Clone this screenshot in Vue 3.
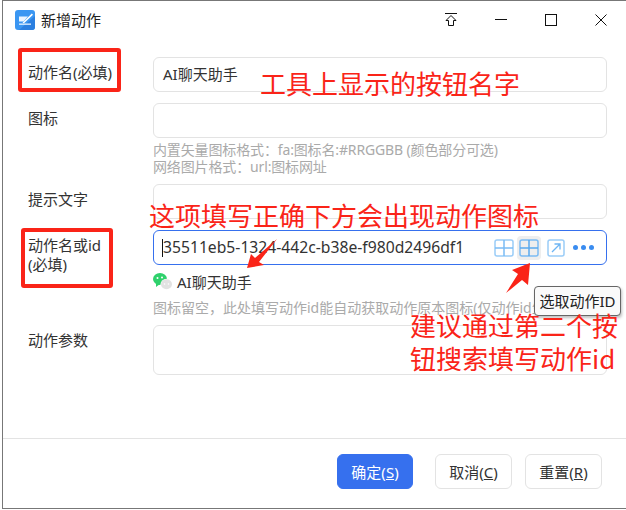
<script setup>
const actionName = 'AI聊天助手'
const actionId = '35511eb5-1324-442c-b38e-f980d2496df1'
</script>

<template>
  <div class="window">
    <header class="titlebar">
      <div class="title-left">
        <svg class="logo" viewBox="0 0 20 20" width="20" height="20">
          <rect width="20" height="20" rx="3" fill="#3a96f2" />
          <path d="M4 20 L20 6 V17 A3 3 0 0 1 17 20 Z" fill="#2b7fe0" />
          <path d="M4 6.500H13L8.500 11.500H4Z" fill="#eaf4ff" />
          <path d="M4 13.500H16V14.800H4Z" fill="#eaf4ff" />
          <path d="M7.500 12.800 L16.800 3.500 L18 4.700 L9 13.200Z" fill="#fff" />
        </svg>
        <span class="title">新增动作</span>
      </div>
      <div class="controls">
        <svg class="ctl" viewBox="0 0 14 14" width="14" height="14">
          <path d="M1 .5H13M7 2.500L12 7.500H9.500V12.500H4.500V7.500H2Z" fill="none" stroke="#111" stroke-width="1" />
        </svg>
        <svg class="ctl" viewBox="0 0 14 14" width="14" height="14">
          <path d="M1 6.500H13" stroke="#111" stroke-width="1" />
        </svg>
        <svg class="ctl" viewBox="0 0 14 14" width="14" height="14">
          <rect x="1.500" y="1.500" width="11" height="11" fill="none" stroke="#111" stroke-width="1" />
        </svg>
        <svg class="ctl" viewBox="0 0 14 14" width="14" height="14">
          <path d="M1.500 1.500L12.500 12.500M12.500 1.500L1.500 12.500" stroke="#111" stroke-width="1" />
        </svg>
      </div>
    </header>

    <main class="form">
      <div class="row">
        <label class="label">动作名(必填)</label>
        <div class="field">
          <div class="input">{{ actionName }}</div>
        </div>
      </div>
      <div class="row">
        <label class="label">图标</label>
        <div class="field">
          <div class="input"></div>
          <p class="hint first">内置矢量图标格式：fa:图标名:#RRGGBB (颜色部分可选)<br />网络图片格式：url:图标网址</p>
        </div>
      </div>
      <div class="row">
        <label class="label">提示文字</label>
        <div class="field">
          <div class="input"></div>
        </div>
      </div>
      <div class="row">
        <label class="label two-line">动作名或id<br />(必填)</label>
        <div class="field">
          <div class="input focus">
            <span class="caret"></span>
            <span class="idtext">{{ actionId }}</span>
            <div class="tools">
              <span class="tool">
                <svg viewBox="0 0 20 18" width="20" height="18"><rect x="1" y="1" width="18" height="16" rx="2" fill="none" stroke="#9bcdf8" stroke-width="1.500" /><path d="M1 9H19M10 1V17" stroke="#7bbcf5" stroke-width="1.500" /></svg>
              </span>
              <span class="tool hover">
                <svg viewBox="0 0 20 18" width="20" height="18"><rect x="1" y="1" width="18" height="16" rx="2" fill="none" stroke="#7cbcf4" stroke-width="1.500" /><path d="M1 9H19M10 1V17" stroke="#5aa9ee" stroke-width="1.500" /></svg>
              </span>
              <span class="tool">
                <svg viewBox="0 0 18 18" width="18" height="18"><rect x="1" y="1" width="16" height="16" rx="2" fill="none" stroke="#9bcdf8" stroke-width="1.500" /><path d="M5 13L13 5M7.500 5H13V10.500" fill="none" stroke="#6db5f3" stroke-width="1.300" /></svg>
              </span>
              <span class="dots"><i></i><i></i><i></i></span>
            </div>
          </div>
          <div class="preview">
            <svg viewBox="0 0 20 18" width="20" height="18">
              <ellipse cx="7" cy="7" rx="7" ry="6" fill="#2fd16c" />
              <path d="M3 11L3 15L7 12Z" fill="#2fd16c" />
              <ellipse cx="13.500" cy="12.300" rx="6" ry="5.500" fill="#fff" />
              <ellipse cx="13.500" cy="12.300" rx="5.500" ry="5" fill="#e2e2e2" />
              <circle cx="4.500" cy="6" r="1" fill="#fff" /><circle cx="9" cy="5.500" r="1" fill="#fff" />
              <circle cx="11.500" cy="12" r=".8" fill="#fff" /><circle cx="15.500" cy="12" r=".8" fill="#fff" />
            </svg>
            <span>{{ actionName }}</span>
          </div>
          <p class="hint third">图标留空，此处填写动作id能自动获取动作原本图标(仅动作id生效)</p>
        </div>
      </div>
      <div class="row">
        <label class="label">动作参数</label>
        <div class="field">
          <div class="input tall"></div>
        </div>
      </div>
    </main>

    <footer class="footer">
      <button class="btn primary">确定(<u>S</u>)</button>
      <button class="btn cancel">取消(<u>C</u>)</button>
      <button class="btn">重置(<u>R</u>)</button>
    </footer>

    <div class="tooltip">选取动作ID</div>

    <div class="mark mark-a"></div>
    <div class="mark mark-b"></div>
    <span class="note note-a">工具上显示的按钮名字</span>
    <span class="note note-b">这项填写正确下方会出现动作图标</span>
    <span class="note note-c">建议通过第二个按</span>
    <span class="note note-d">钮搜索填写动作id</span>
    <svg class="arrows" viewBox="0 0 626 510" width="626" height="510">
      <path d="M247 268L251 254L255 258L277 239L259 262L264 265Z" fill="#fa2418" />
      <path d="M530 263L528 285L522 280L506 293L518 274L512 270Z" fill="#fa2418" />
    </svg>
  </div>
</template>

<style>
html, body { margin: 0; padding: 0; background: #fff; }
</style>

<style scoped>
.window {
  position: relative;
  width: 624px;
  height: 509px;
  margin-left: 2px;
  box-sizing: border-box;
  background: #fff;
  border-top: 1px solid #777;
  border-left: 1px solid #777;
  border-bottom: 1px solid #777;
  display: flex;
  flex-direction: column;
  overflow: hidden;
  font-family: "Noto Sans", "Noto Sans CJK SC", sans-serif;
  color: #333;
  font-size: 15px;
}
.titlebar {
  height: 38px;
  flex: none;
  display: flex;
  align-items: center;
  justify-content: space-between;
  padding: 0 18px 0 12px;
}
.title-left { display: flex; align-items: center; gap: 6px; }
.logo { display: block; }
.title { font-size: 15px; color: #222; line-height: 20px; }
.controls { display: flex; gap: 36px; }
.ctl { display: block; }
.form {
  flex: 1;
  padding: 18px 18px 0 25px;
  display: flex;
  flex-direction: column;
  gap: 11px;
}
.row { display: grid; grid-template-columns: 125px 454px; }
.label { line-height: 20px; padding-top: 5px; color: #333; white-space: nowrap; }
.label.two-line { padding-top: 6px; line-height: 19px; }
.field { min-width: 0; }
.input {
  box-sizing: border-box;
  height: 35px;
  border: 1px solid #e3e3e3;
  border-radius: 6px;
  padding: 0 9px;
  line-height: 33px;
  color: #333;
  position: relative;
}
.input.tall { height: 50px; }
.input.focus {
  border-color: #3670ee;
  padding-left: 8px;
  display: flex;
  align-items: center;
  white-space: nowrap;
}
.caret { width: 1px; height: 18px; background: #111; flex: none; }
.idtext { font-size: 15.7px; }
.tools {
  position: absolute;
  right: 12px;
  top: 3px;
  display: flex;
  align-items: center;
  height: 27px;
}
.tool { display: flex; align-items: center; justify-content: center; margin-left: 5px; }
.tool.hover { background: #eee; border-radius: 4px; padding: 3px 2px; margin-left: 3px; margin-right: 1px; }
.tool svg { display: block; }
.dots { display: flex; gap: 3px; margin-left: 8px; }
.dots i { display: block; width: 5px; height: 5px; border-radius: 50%; background: #3a8cf0; }
.hint { margin: 0; color: #aaa; font-size: 14px; line-height: 17px; white-space: nowrap; }
.hint.first { padding-top: 3px; margin-bottom: -2px; letter-spacing: -0.14px; }
.hint.third { margin-top: 9px; margin-bottom: -2px; }
.preview { display: flex; align-items: center; gap: 4px; height: 18px; margin-top: 7px; }
.preview svg { display: block; }
.footer {
  height: 70px;
  flex: none;
  box-sizing: border-box;
  border-top: 1px solid #e3e3e3;
  padding: 15px 0 0 334px;
  display: flex;
  align-items: flex-start;
  gap: 13px;
}
.btn {
  width: 77px;
  height: 35px;
  box-sizing: border-box;
  border: 1px solid #e3e3e3;
  border-radius: 6px;
  background: #fff;
  font: inherit;
  color: #333;
  padding: 0;
}
.btn.primary { background: #3670ee; border-color: #3670ee; color: #fff; width: 76px; margin-right: 9px; }
.tooltip {
  position: absolute;
  left: 531px;
  top: 285px;
  width: 87px;
  height: 30px;
  box-sizing: border-box;
  border: 1px solid #666;
  border-radius: 4px;
  background: #fafafa;
  box-shadow: 1px 2px 3px rgba(0,0,0,.25);
  line-height: 28px;
  text-align: center;
  color: #222;
  font-size: 15px;
  white-space: nowrap;
}
.mark { position: absolute; box-sizing: border-box; border: 4px solid #fa2418; border-radius: 3px; }
.mark-a { left: 15px; top: 47px; width: 103px; height: 44px; }
.mark-b { left: 18px; top: 227px; width: 92px; height: 60px; }
.note { position: absolute; color: #fa2418; font-size: 26px; line-height: 34px; white-space: nowrap; font-family: "Noto Sans CJK SC", sans-serif; font-weight: 400; }
.note-a { left: 257px; top: 65px; }
.note-b { left: 146px; top: 197px; }
.note-c { left: 407px; top: 307px; }
.note-d { left: 407px; top: 340px; }
.arrows { position: absolute; left: -3px; top: -1px; pointer-events: none; }
</style>
